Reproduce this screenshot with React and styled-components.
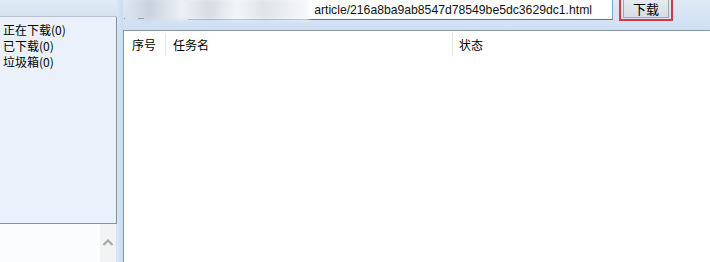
import React from "react";
import styled, { createGlobalStyle } from "styled-components";

const Global = createGlobalStyle`
  html, body { margin: 0; padding: 0; overflow: hidden; background: #fff; }
  * { box-sizing: border-box; }
`;

const cjk = `"Noto Sans CJK SC", "Noto Sans", sans-serif`;

const Window = styled.div`
  width: 710px;
  height: 262px;
  display: flex;
  overflow: hidden;
  font-family: ${cjk};
  font-size: 12px;
  color: #000;
`;

const LeftColumn = styled.div`
  width: 117px;
  display: flex;
  flex-direction: column;
`;

const LeftTop = styled.div`
  height: 17px;
  background: linear-gradient(#e1eaf5, #d6e3f2);
  border-bottom: 1px solid #b4c3d6;
`;

const CategoryPanel = styled.div`
  height: 207px;
  background: #eaf1fa;
  border-right: 1px solid #8592a5;
  border-bottom: 1px solid #8592a5;
  padding: 5px 0 0 3px;
  display: flex;
  flex-direction: column;
`;

const CategoryItem = styled.div`
  height: 16px;
  line-height: 16px;
  white-space: nowrap;
`;

const LeftBottom = styled.div`
  flex: 1;
  display: flex;
  justify-content: flex-end;
  background: #fbfcfd;
  border-right: 1px solid #d6e2f0;
`;

const ScrollTrack = styled.div`
  width: 16px;
  background: #f3f3f3;
  display: flex;
  justify-content: center;
  padding-top: 14px;
`;

const Splitter = styled.div`
  width: 6px;
  background: linear-gradient(90deg, #d8e6f6, #c9dcf2);
`;

const RightColumn = styled.div`
  flex: 1;
  display: flex;
  flex-direction: column;
`;

const Toolbar = styled.div`
  height: 30px;
  background: linear-gradient(#dfe9f5, #cfdff2);
  display: flex;
  align-items: flex-start;
  padding-left: 7px;
  position: relative;
`;

const Smudge = styled.div`
  position: absolute;
  left: 4px;
  top: -2px;
  width: 182px;
  height: 22px;
  background: linear-gradient(
    90deg,
    #dbe3ee 0%,
    #c9d2dd 12%,
    #eef1f5 30%,
    #d6dbe2 45%,
    #f4f5f7 60%,
    #dfe3e8 75%,
    #f8f9fa 100%
  );
  filter: blur(2px);
`;

const Dash = styled.div`
  position: absolute;
  top: 18px;
  left: ${(p) => p.$left}px;
  width: ${(p) => p.$w}px;
  height: 1px;
  background: #7ea6d0;
`;

const UrlInput = styled.div`
  margin-left: 58px;
  width: 425px;
  height: 20px;
  background: #fff;
  border-bottom: 1px solid #3f82bd;
  border-right: 1px solid #7fa8cf;
  display: flex;
  align-items: center;
  justify-content: flex-end;
  padding-right: 20px;
  font-family: "Liberation Sans", Arial, sans-serif;
  font-size: 12.2px;
  color: #111;
  white-space: nowrap;
  overflow: hidden;
`;

const Highlight = styled.div`
  margin-left: 6px;
  width: 54px;
  height: 21px;
  border: 2px solid #e0353d;
  border-top: none;
  padding: 0 2px 1px 2px;
  display: flex;
`;

const DownloadButton = styled.button`
  flex: 1;
  height: 18px;
  margin: 0;
  padding: 0;
  border: 1px solid #9aa9bb;
  border-top: none;
  background: linear-gradient(#e6ebf1, #d6dde6);
  font-family: ${cjk};
  font-size: 13px;
  line-height: 16px;
  color: #000;
`;

const List = styled.div`
  flex: 1;
  background: #fff;
  border-top: 1px solid #8a97a8;
  border-left: 1px solid #8a97a8;
`;

const HeaderRow = styled.div`
  height: 26px;
  display: flex;
  align-items: center;
`;

const HeaderCell = styled.div`
  width: ${(p) => (p.$w ? `${p.$w}px` : "auto")};
  flex: ${(p) => (p.$w ? "none" : 1)};
  height: 23px;
  line-height: 23px;
  padding-left: ${(p) => p.$pad}px;
  border-right: ${(p) => (p.$w ? "1px solid #e4e6e9" : "none")};
  white-space: nowrap;
`;

const Chevron = () => (
  <svg width="12" height="8" viewBox="0 0 12 8">
    <path d="M1.5 7 L6 2.5 L10.5 7" fill="none" stroke="#a5a5a5" strokeWidth="2" />
  </svg>
);

export default function App() {
  return (
    <>
      <Global />
      <Window>
        <LeftColumn>
          <LeftTop />
          <CategoryPanel>
            <CategoryItem>正在下载(0)</CategoryItem>
            <CategoryItem>已下载(0)</CategoryItem>
            <CategoryItem>垃圾箱(0)</CategoryItem>
          </CategoryPanel>
          <LeftBottom>
            <ScrollTrack>
              <Chevron />
            </ScrollTrack>
          </LeftBottom>
        </LeftColumn>
        <Splitter />
        <RightColumn>
          <Toolbar>
            <UrlInput>article/216a8ba9ab8547d78549be5dc3629dc1.html</UrlInput>
            <Smudge />
            <Dash $left={1} $w={1} />
            <Dash $left={15} $w={6} />
            <Highlight>
              <DownloadButton>下载</DownloadButton>
            </Highlight>
          </Toolbar>
          <List>
            <HeaderRow>
              <HeaderCell $w={42} $pad={8}>序号</HeaderCell>
              <HeaderCell $w={287} $pad={7}>任务名</HeaderCell>
              <HeaderCell $pad={6}>状态</HeaderCell>
            </HeaderRow>
          </List>
        </RightColumn>
      </Window>
    </>
  );
}
